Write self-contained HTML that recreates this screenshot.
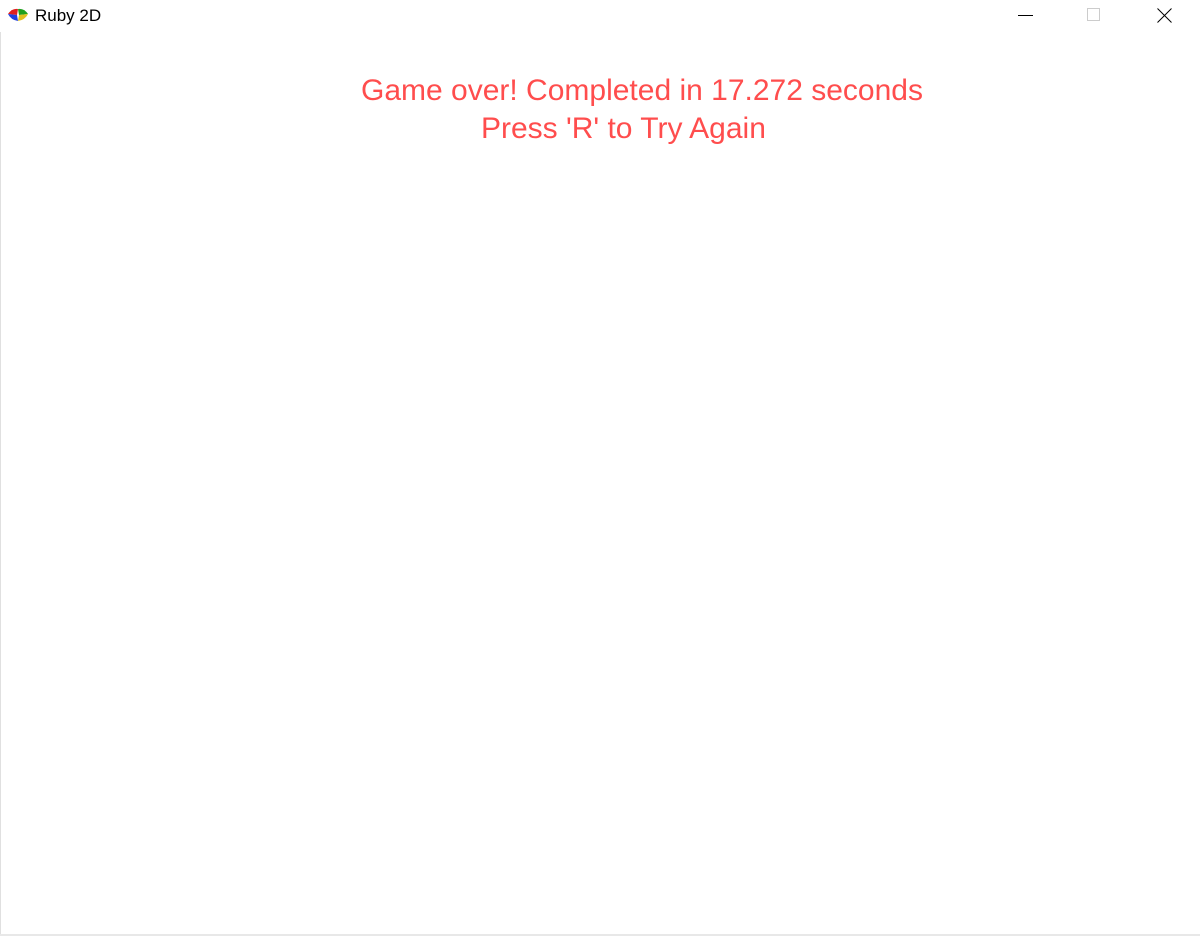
<!DOCTYPE html>
<html><head><style>
html,body{margin:0;padding:0;width:1200px;height:936px;background:#fff;overflow:hidden;font-family:"Liberation Sans",Arial,sans-serif;position:relative}
.t{position:absolute;color:#ff4d4d;font-size:30px;line-height:30px;white-space:nowrap}
.title{position:absolute;left:35px;top:6px;font-size:17px;color:#000}
.lb{position:absolute;left:0;top:32px;width:1px;height:904px;background:#e0e0e0}
.bb{position:absolute;left:0;top:934px;width:1200px;height:2px;background:#e8e8e8}
</style></head><body>
<svg style="position:absolute;left:7px;top:8px" width="22" height="14" viewBox="0 0 22 14">
<path d="M1 6 Q5 0 11 1 L10 7 Z" fill="#e02020"/>
<path d="M11 1 Q17 0 21 6 L12 7 Z" fill="#20a020"/>
<path d="M1 6 L10 7 L11 13 Q4 12 1 6Z" fill="#2040e0"/>
<path d="M21 6 L12 7 L11 13 Q18 12 21 6Z" fill="#e0c020"/>
</svg>
<div class="title">Ruby 2D</div>
<div style="position:absolute;left:1018px;top:15px;width:15px;height:1px;background:#000"></div>
<div style="position:absolute;left:1087px;top:8px;width:13px;height:13px;border:1px solid #ccc;box-sizing:border-box"></div>
<svg style="position:absolute;left:1157px;top:8px" width="15" height="15"><path d="M0.5 0.5L14.5 14.5M14.5 0.5L0.5 14.5" stroke="#000" stroke-width="1"/></svg>
<div class="lb"></div><div class="bb"></div>
<div class="t" style="left:361px;top:76px">Game over! Completed in 17.272 seconds</div>
<div class="t" style="left:481px;top:114px">Press 'R' to Try Again</div>
</body></html>
